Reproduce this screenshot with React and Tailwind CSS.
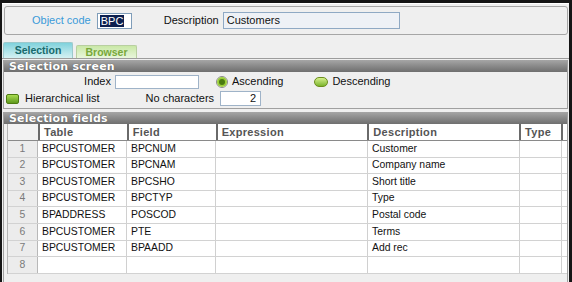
const rows = [
  ["1", "BPCUSTOMER", "BPCNUM", "", "Customer"],
  ["2", "BPCUSTOMER", "BPCNAM", "", "Company name"],
  ["3", "BPCUSTOMER", "BPCSHO", "", "Short title"],
  ["4", "BPCUSTOMER", "BPCTYP", "", "Type"],
  ["5", "BPADDRESS", "POSCOD", "", "Postal code"],
  ["6", "BPCUSTOMER", "PTE", "", "Terms"],
  ["7", "BPCUSTOMER", "BPAADD", "", "Add rec"],
  ["8", "", "", "", ""],
];

function SectionBar({ children }) {
  return (
    <div className="h-[12px] bg-gradient-to-b from-[#a6a6a6] via-[#8a8a8a] to-[#6f6f6f] flex items-center pl-[5px]">
      <span className="text-white font-bold text-[11px] leading-none tracking-[0.2px] [text-shadow:0_0_1px_#444]" style={{ fontFamily: '"DejaVu Sans", sans-serif' }}>
        {children}
      </span>
    </div>
  );
}

export default function App() {
  return (
    <div
      className="w-[572px] h-[282px] bg-[#151515] pt-[3px] pl-[2px] pr-[3px] overflow-hidden text-[11px] text-[#111]"
      style={{ fontFamily: '"Liberation Sans", Arial, sans-serif' }}
    >
      <div className="h-full bg-[#efefef] border-t border-white flex flex-col">
        {/* header panel */}
        <div className="mt-[2px] ml-[2px] mr-[1px] h-[29px] border border-[#a6a6a6] rounded-[3px] flex items-center">
          <span className="ml-[27px] text-[#3a9ad9] leading-none">Object code</span>
          <div className="ml-[6px] w-[35px] h-[16px] border border-[#7f9db9] bg-white flex items-center pl-[2px]">
            <span className="bg-[#0c1f4f] text-white leading-[12px] px-[1px]">BPC</span>
          </div>
          <span className="ml-[32px] leading-none">Description</span>
          <div className="ml-[4px] w-[177px] h-[17px] border border-[#8fa9c4] bg-[#eef1f6] flex items-center pl-[3px] leading-none">
            Customers
          </div>
        </div>

        {/* tabs */}
        <div className="mt-[8px] h-[16px] flex items-end border-b border-[#9c9c9c] pl-[1px]">
          <div className="w-[70px] h-[16px] rounded-t-[2px] border border-b-0 border-[#9cc9cc] bg-gradient-to-b from-[#7fd2dc] to-[#d4f1f3] flex items-center justify-center">
            <span className="font-bold text-[10.5px] text-[#176a6c] leading-none">Selection</span>
          </div>
          <div className="ml-[3px] w-[61px] h-[13px] rounded-t-[2px] border border-b-0 border-[#b8cfa0] bg-gradient-to-b from-[#c9e8a6] to-[#e9f6dc] flex items-center justify-center">
            <span className="font-bold text-[10.5px] text-[#78a83a] leading-none">Browser</span>
          </div>
        </div>

        {/* selection screen */}
        <div className="mt-[1px] ml-[1px] mr-[1px] border-l border-r border-b border-[#a0a0a0]">
          <SectionBar>Selection screen</SectionBar>
          <div className="h-[36px] flex flex-col">
            <div className="mt-[2px] h-[15px] flex items-center">
              <span className="w-[107px] text-right leading-none">Index</span>
              <div className="ml-[4px] w-[84px] h-[14px] border border-[#9fb3c8] bg-white" />
              <div className="ml-[17px] w-[12px] h-[12px] rounded-full border border-[#8a8a8a] bg-white flex items-center justify-center">
                <div className="w-[6px] h-[6px] rounded-full bg-[#4a7a10] ring-2 ring-[#9ccf3c]" />
              </div>
              <span className="ml-[4px] leading-none">Ascending</span>
              <div className="ml-[31px] w-[14px] h-[10px] rounded-full border border-[#6b8e1c] bg-gradient-to-b from-[#d6f08a] to-[#7cb52a]" />
              <span className="ml-[4px] leading-none">Descending</span>
            </div>
            <div className="mt-[2px] h-[15px] flex items-center">
              <div className="ml-[2px] w-[13px] h-[10px] rounded-[2px] border border-[#4e7c12] bg-gradient-to-b from-[#a9dc50] to-[#5f9a1c]" />
              <span className="ml-[6px] leading-none">Hierarchical list</span>
              <span className="ml-[46px] leading-none">No characters</span>
              <div className="ml-[6px] w-[41px] h-[15px] border border-[#9fb3c8] bg-white flex items-center justify-end pr-[4px] leading-none">
                2
              </div>
            </div>
          </div>
        </div>

        {/* selection fields */}
        <div className="mt-[3px] ml-[1px] mr-[1px] flex-1 border-l border-r border-[#a0a0a0] flex flex-col">
          <SectionBar>Selection fields</SectionBar>
          <div className="ml-[3px] bg-white border-l border-[#b5b5b5]">
            <div className="h-[17px] flex border-b border-[#8a8a8a] text-[#555] font-bold tracking-[0.3px]">
              <div className="w-[30px] bg-[#f2f2f2]" />
              {[
                ["Table", "w-[89px]"],
                ["Field", "w-[89px]"],
                ["Expression", "w-[152px]"],
                ["Description", "w-[152px]"],
                ["Type", "w-[42px]"],
                ["Crit", "flex-1"],
              ].map(([t, w]) => (
                <div key={t} className={`${w} border-l-2 border-[#6a6a6a] pl-[4px] flex items-center leading-none overflow-hidden whitespace-nowrap`}>
                  {t}
                </div>
              ))}
            </div>
            {rows.map((r) => (
              <div key={r[0]} className="h-[16.6px] flex border-b border-[#d2d2d2] text-[10.4px]">
                <div className="w-[30px] bg-[#ececec] border-r border-[#b8b8b8] flex items-center justify-center text-[#7a7a7a] leading-none">
                  {r[0]}
                </div>
                <div className="w-[89px] border-r border-[#d0d0d0] pl-[4px] flex items-center leading-none">{r[1]}</div>
                <div className="w-[89px] border-r border-[#d0d0d0] pl-[4px] flex items-center leading-none">{r[2]}</div>
                <div className="w-[152px] border-r border-[#d0d0d0] pl-[4px] flex items-center leading-none">{r[3]}</div>
                <div className="w-[152px] border-r border-[#d0d0d0] pl-[4px] flex items-center leading-none">{r[4]}</div>
                <div className="w-[42px] border-r border-[#d0d0d0]" />
                <div className="flex-1" />
              </div>
            ))}
          </div>
        </div>
      </div>
    </div>
  );
}
